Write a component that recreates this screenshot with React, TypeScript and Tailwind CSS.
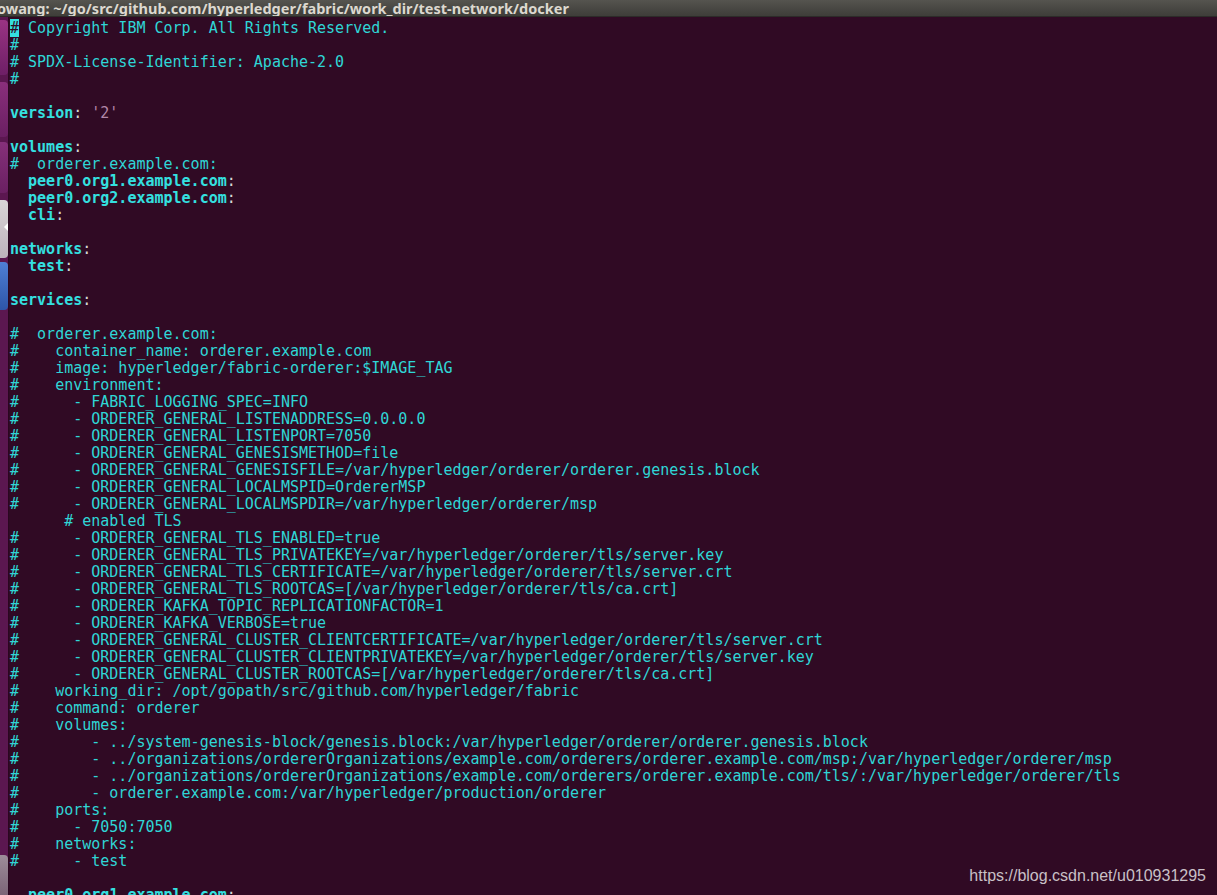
type Seg = [string, "c" | "k" | "p" | "s"];

const C = (t: string): Seg[] => [[t, "c"]];
const K = (indent: string, key: string): Seg[] => [
  [indent + key, "k"],
  [":", "p"],
];

const lines: Seg[][] = [
  C("# Copyright IBM Corp. All Rights Reserved."),
  C("#"),
  C("# SPDX-License-Identifier: Apache-2.0"),
  C("#"),
  [],
  [["version", "k"], [": ", "p"], ["'2'", "s"]],
  [],
  K("", "volumes"),
  C("#  orderer.example.com:"),
  K("  ", "peer0.org1.example.com"),
  K("  ", "peer0.org2.example.com"),
  K("  ", "cli"),
  [],
  K("", "networks"),
  K("  ", "test"),
  [],
  K("", "services"),
  [],
  C("#  orderer.example.com:"),
  C("#    container_name: orderer.example.com"),
  C("#    image: hyperledger/fabric-orderer:$IMAGE_TAG"),
  C("#    environment:"),
  C("#      - FABRIC_LOGGING_SPEC=INFO"),
  C("#      - ORDERER_GENERAL_LISTENADDRESS=0.0.0.0"),
  C("#      - ORDERER_GENERAL_LISTENPORT=7050"),
  C("#      - ORDERER_GENERAL_GENESISMETHOD=file"),
  C("#      - ORDERER_GENERAL_GENESISFILE=/var/hyperledger/orderer/orderer.genesis.block"),
  C("#      - ORDERER_GENERAL_LOCALMSPID=OrdererMSP"),
  C("#      - ORDERER_GENERAL_LOCALMSPDIR=/var/hyperledger/orderer/msp"),
  C("      # enabled TLS"),
  C("#      - ORDERER_GENERAL_TLS_ENABLED=true"),
  C("#      - ORDERER_GENERAL_TLS_PRIVATEKEY=/var/hyperledger/orderer/tls/server.key"),
  C("#      - ORDERER_GENERAL_TLS_CERTIFICATE=/var/hyperledger/orderer/tls/server.crt"),
  C("#      - ORDERER_GENERAL_TLS_ROOTCAS=[/var/hyperledger/orderer/tls/ca.crt]"),
  C("#      - ORDERER_KAFKA_TOPIC_REPLICATIONFACTOR=1"),
  C("#      - ORDERER_KAFKA_VERBOSE=true"),
  C("#      - ORDERER_GENERAL_CLUSTER_CLIENTCERTIFICATE=/var/hyperledger/orderer/tls/server.crt"),
  C("#      - ORDERER_GENERAL_CLUSTER_CLIENTPRIVATEKEY=/var/hyperledger/orderer/tls/server.key"),
  C("#      - ORDERER_GENERAL_CLUSTER_ROOTCAS=[/var/hyperledger/orderer/tls/ca.crt]"),
  C("#    working_dir: /opt/gopath/src/github.com/hyperledger/fabric"),
  C("#    command: orderer"),
  C("#    volumes:"),
  C("#        - ../system-genesis-block/genesis.block:/var/hyperledger/orderer/orderer.genesis.block"),
  C("#        - ../organizations/ordererOrganizations/example.com/orderers/orderer.example.com/msp:/var/hyperledger/orderer/msp"),
  C("#        - ../organizations/ordererOrganizations/example.com/orderers/orderer.example.com/tls/:/var/hyperledger/orderer/tls"),
  C("#        - orderer.example.com:/var/hyperledger/production/orderer"),
  C("#    ports:"),
  C("#      - 7050:7050"),
  C("#    networks:"),
  C("#      - test"),
  [],
  K("  ", "peer0.org1.example.com"),
];

const segClass = {
  c: "text-[#2fd6d6]",
  k: "text-[#34e0e0] font-bold",
  p: "text-[#d6d6d6]",
  s: "text-[#b087a8]",
};

function Launcher() {
  return (
    <div className="w-[9px] shrink-0 bg-[#5b1750] border-r border-[#2a0620] flex flex-col">
      <div className="mt-[3px] h-[55px] w-[8px] rounded-r-[4px] bg-gradient-to-b from-[#9a3384] to-[#6e1f66]" />
      <div className="mt-[7px] h-[55px] w-[8px] rounded-r-[4px] bg-gradient-to-b from-[#8a2f7c] to-[#6a1f62]" />
      <div className="mt-[5px] h-[51px] w-[8px] rounded-r-[4px] bg-gradient-to-b from-[#86307a] to-[#6a2062]" />
      <div className="relative mt-[7px] h-[58px] w-[8px] rounded-r-[4px] bg-gradient-to-b from-[#d9d4d8] to-[#bdb3bb]">
        <div className="absolute right-0 top-[23px] w-0 h-0 border-y-[4px] border-y-transparent border-r-[4px] border-r-white" />
      </div>
      <div className="mt-[4px] h-[48px] w-[8px] rounded-r-[4px] bg-gradient-to-b from-[#4f7fd6] to-[#2e55a8]" />
      <div className="flex-1" />
      <div className="h-[40px] w-[8px] rounded-tr-[4px] bg-gradient-to-b from-[#9d8d9a] to-[#7c6578]" />
    </div>
  );
}

export default function App() {
  return (
    <div className="relative w-[1217px] h-[895px] overflow-hidden bg-[#300a24] flex flex-col">
      {/* title bar */}
      <div className="h-[17px] shrink-0 bg-gradient-to-b from-[#55544f] to-[#3e3d39] border-b border-[#2c2b28] flex items-center overflow-hidden">
        <span className="-ml-[3px] whitespace-nowrap text-[14.5px] leading-[17px] font-bold text-[#dcd8cf] [font-family:'Noto_Sans','DejaVu_Sans',sans-serif]">
          owang: ~/go/src/github.com/hyperledger/fabric/work_dir/test-network/docker
        </span>
      </div>

      <div className="flex flex-1 min-h-0">
        <Launcher />
        <div className="flex-1 pt-[3px] pl-[1px] overflow-hidden text-[15px] leading-[17px] whitespace-pre [font-family:'DejaVu_Sans_Mono','Liberation_Mono',monospace]">
          {lines.map((segs, i) => (
            <div key={i} className="h-[17px]">
              {i === 0 ? (
                <>
                  <span className="bg-[#34e0e0] text-[#300a24]">#</span>
                  <span className={segClass.c}>{segs[0][0].slice(1)}</span>
                </>
              ) : (
                segs.map(([t, s], j) => (
                  <span key={j} className={segClass[s]}>
                    {t}
                  </span>
                ))
              )}
            </div>
          ))}
        </div>
      </div>

      {/* watermark */}
      <div className="absolute right-[11px] bottom-[10px] text-[16px] leading-[18px] text-[#c9c0c6] [font-family:'Liberation_Sans',Arial,sans-serif]">
        https://blog.csdn.net/u010931295
      </div>
    </div>
  );
}
